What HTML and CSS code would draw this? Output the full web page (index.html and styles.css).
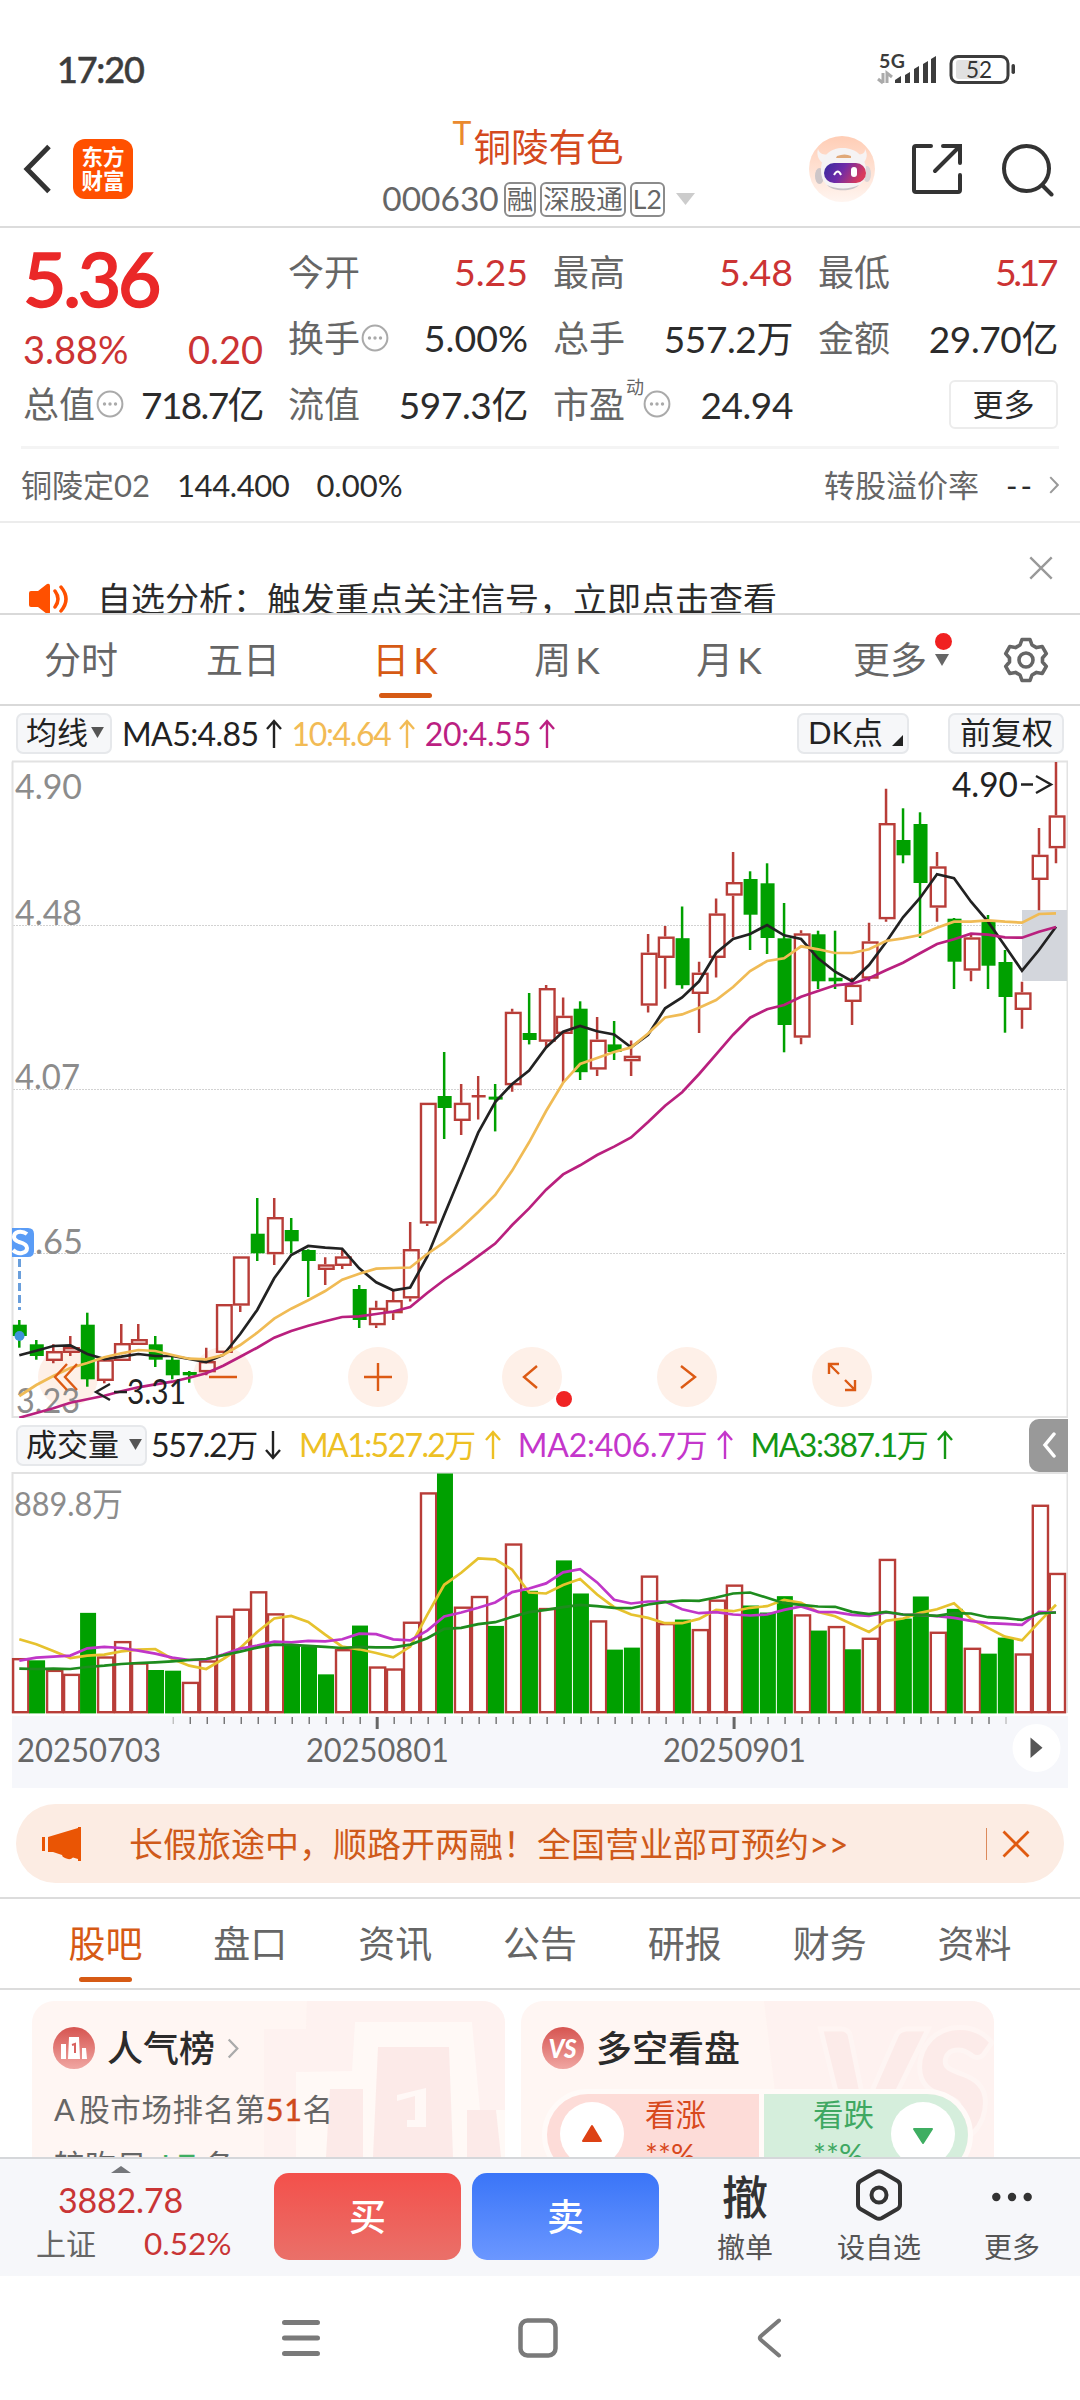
FILE: index.html
```html
<!DOCTYPE html>
<html lang="zh-CN">
<head>
<meta charset="utf-8">
<title>铜陵有色 000630</title>
<link rel="stylesheet" href="styles.css">
</head>
<body>
<svg class="defs" aria-hidden="true">
  <symbol id="up" viewBox="0 0 16 30"><path d="M8 29V2M1 10L8 2l7 8" fill="none" stroke="currentColor" stroke-width="2.4"/></symbol>
  <symbol id="down" viewBox="0 0 16 30"><path d="M8 1v27M1 20l7 8 7-8" fill="none" stroke="currentColor" stroke-width="2.4"/></symbol>
  <symbol id="info" viewBox="0 0 28 28"><circle cx="14" cy="14" r="12.4" fill="none" stroke="#aaa" stroke-width="2"/><circle cx="8.5" cy="14" r="1.7" fill="#aaa"/><circle cx="14" cy="14" r="1.7" fill="#aaa"/><circle cx="19.500" cy="14" r="1.7" fill="#aaa"/></symbol>
  <symbol id="cross" viewBox="0 0 28 28"><path d="M1.500 1.500l25 25M26.500 1.500l-25 25" fill="none" stroke="currentColor" stroke-width="2.800"/></symbol>
  <symbol id="next" viewBox="0 0 12 22"><path d="M1.500 1.500L10.500 11l-9 9.500" fill="none" stroke="currentColor" stroke-width="2.400"/></symbol>
</svg>

<div class="statusbar">
  <span class="clock">17:20</span>
  <svg class="signal" width="140" height="36" viewBox="876 50 140 36">
    <text x="879" y="68" font-size="19.500" font-weight="700" fill="#3c3c3c" textLength="26">5G</text>
    <path d="M883 73v10M878 79l5 4M887 83V73l5 4" fill="none" stroke="#aaa" stroke-width="3"/>
    <path d="M895 83v-3l6-4v7zM905 83v-8l5-3v11zM914 83V69l5-3v17zM923 83V64l5-3v22zM931 83V59l5-3v27z" fill="#3c3c3c"/>
    <rect x="956" y="60" width="24" height="19" rx="3" fill="#e1e1e1"/>
    <rect x="951" y="56.500" width="57" height="26" rx="7" fill="none" stroke="#3c3c3c" stroke-width="3"/>
    <rect x="1011.500" y="64" width="3.500" height="10" rx="1.700" fill="#3c3c3c"/>
    <text x="966" y="78" font-size="22.500" fill="#333" textLength="26">52</text>
  </svg>
</div>

<header class="header">
  <div class="left">
    <svg width="30" height="50" viewBox="0 0 30 50"><path d="M27 2.500L5 25l22 22.500" fill="none" stroke="#333" stroke-width="5"/></svg>
    <div class="logo"><span>东方</span><span>财富</span></div>
  </div>
  <div class="title">
    <div class="name"><sup>T</sup>铜陵有色</div>
    <div class="code"><span class="num">000630</span><i>融</i><i>深股通</i><i>L2</i><svg width="19" height="12" viewBox="0 0 19 12"><path d="M0 0h19L9.500 12z" fill="#ccc"/></svg></div>
  </div>
  <div class="tools">
    <svg width="66" height="66" viewBox="0 0 66 66">
      <defs>
        <linearGradient id="peach" x1="0" y1="0" x2="0" y2="1"><stop offset="0" stop-color="#ffcdb5"/><stop offset="1" stop-color="#fff5f0"/></linearGradient>
        <linearGradient id="visor" x1="0" y1="0" x2="1" y2=".3"><stop offset="0" stop-color="#352a9e"/><stop offset=".5" stop-color="#6f2ba8"/><stop offset="1" stop-color="#d83a5c"/></linearGradient>
      </defs>
      <circle cx="33" cy="33" r="33" fill="url(#peach)"/>
      <ellipse cx="10.500" cy="40" rx="4.500" ry="8" fill="#cdc6c8"/><ellipse cx="58" cy="38" rx="4" ry="8" fill="#dcd5d6"/>
      <path d="M9 13c2 6 6 5 10 6l-4 9c-5-3-8-9-6-15zM56 13c0 5-3 5-7 6l5 8c4-3 5-9 2-14z" fill="#f7f3f3"/>
      <path d="M12 34c0-14 9-22 22-22s23 9 23 23c0 12-8 18-23 18s-22-6-22-19z" fill="#f5f3f4"/>
      <path d="M18 49c8 4 22 5 32 0-6 7-26 7-32 0z" fill="#c9c4c8"/>
      <rect x="15" y="27" width="42" height="20" rx="10" fill="url(#visor)"/>
      <path d="M25 39q4-7 7 0" fill="none" stroke="#fff" stroke-width="2"/><rect x="42" y="31" width="6" height="10" rx="3" fill="#fff"/>
      <path d="M28 20q8-3 14 0v2H27z" fill="#e0a878"/>
    </svg>
    <svg class="share" width="52" height="52" viewBox="0 0 52 52"><path d="M20 3H5q-2 0-2 2v42q0 2 2 2h42q2 0 2-2V32M32 3h17v17M49 3L24 28" fill="none" stroke="#333" stroke-width="4" stroke-linecap="round"/></svg>
    <svg width="54" height="54" viewBox="0 0 54 54"><circle cx="25.500" cy="25.500" r="22.500" fill="none" stroke="#333" stroke-width="4"/><path d="M42 43l8.500 8.500" stroke="#333" stroke-width="4" stroke-linecap="round"/></svg>
  </div>
</header>

<section class="quote">
  <div class="main">
    <div class="price">5.36</div>
    <div class="pair red change"><span>3.88%</span><span>0.20</span></div>
    <div class="pair"><label>总值<svg><use href="#info"/></svg></label><b class="tight">718.7亿</b></div>
  </div>
  <div class="col">
    <div class="pair red"><label>今开</label><b>5.25</b></div>
    <div class="pair"><label>换手<svg><use href="#info"/></svg></label><b>5.00%</b></div>
    <div class="pair"><label>流值</label><b class="snug">597.3亿</b></div>
  </div>
  <div class="col">
    <div class="pair red"><label>最高</label><b>5.48</b></div>
    <div class="pair"><label>总手</label><b class="snug">557.2万</b></div>
    <div class="pair"><label>市盈<sup>动</sup><svg><use href="#info"/></svg></label><b class="snug">24.94</b></div>
  </div>
  <div class="col">
    <div class="pair red"><label>最低</label><b class="tighter">5.17</b></div>
    <div class="pair"><label>金额</label><b class="snug">29.70亿</b></div>
    <div class="pair end"><span class="more">更多</span></div>
  </div>
</section>

<section class="bond">
  <label>铜陵定02</label><span class="val">144.400</span><span>0.00%</span>
  <label class="push">转股溢价率</label><span class="dash">--</span><svg width="10" height="20"><use href="#next"/></svg>
</section>

<section class="notice">
  <svg class="horn" width="40" height="32" viewBox="0 0 40 32"><path d="M0 10q0-2 2-2h7l9-7q3-1 3 2v26q0 3-3 2l-9-7H2q-2 0-2-2z" fill="#ff5000"/><path d="M26 8q6 8 0 16M32 4q10 12 0 24" fill="none" stroke="#ff5000" stroke-width="3.500" stroke-linecap="round"/></svg>
  <span>自选分析：触发重点关注信号，立即点击查看</span>
  <svg class="close" width="24" height="24"><use href="#cross"/></svg>
</section>

<nav class="periods">
  <span>分时</span><span>五日</span><span class="on">日<u>K</u></span><span>周<u>K</u></span><span>月<u>K</u></span>
  <span class="drop">更多<svg width="14" height="12" viewBox="0 0 14 12"><path d="M0 0h14L7 12z" fill="#666"/></svg><em></em></span>
  <svg class="gear" width="46" height="46" viewBox="0 0 46 46"><path d="M19 2.500h8l2 5.500 4.500 2.600 5.800-1 4 7-3.800 4.400v4l3.800 4.400-4 7-5.800-1L29 38l-2 5.500h-8L17 38l-4.500-2.600-5.800 1-4-7L6.500 25v-4l-3.800-4.400 4-7 5.800 1L17 8z" fill="none" stroke="#666" stroke-width="3.600" stroke-linejoin="round"/><circle cx="23" cy="23" r="7" fill="none" stroke="#666" stroke-width="3.600"/></svg>
</nav>

<section class="ma">
  <span class="chip">均线<svg width="13" height="11" viewBox="0 0 14 12"><path d="M0 0h14L7 12z" fill="#555"/></svg></span>
  <span class="ma5">MA5:4.85<svg><use href="#up"/></svg></span>
  <span class="ma10">10:4.64<svg><use href="#up"/></svg></span>
  <span class="ma20">20:4.55<svg><use href="#up"/></svg></span>
  <span class="chip dk">DK点<svg width="11" height="11" viewBox="0 0 11 11"><path d="M11 0v11H0z" fill="#222"/></svg></span>
  <span class="chip adj">前复权</span>
</section>

<svg id="kline" class="chart" width="1068" height="658" viewBox="0 760 1068 658"></svg>

<section class="ma vol">
  <span class="chip">成交量<svg width="13" height="11" viewBox="0 0 14 12"><path d="M0 0h14L7 12z" fill="#555"/></svg></span>
  <span class="ma5">557.2万<svg><use href="#down"/></svg></span>
  <span class="v1">MA1:527.2万<svg><use href="#up"/></svg></span>
  <span class="v2">MA2:406.7万<svg><use href="#up"/></svg></span>
  <span class="v3">MA3:387.1万<svg><use href="#up"/></svg></span>
  <span class="expand"><svg width="14" height="26" viewBox="0 0 14 26"><path d="M12 2L3 13l9 11" fill="none" stroke="#fff" stroke-width="3.500" stroke-linecap="round"/></svg></span>
</section>

<svg id="volume" class="chart" width="1068" height="316" viewBox="0 1472 1068 316"></svg>

<section class="promo">
  <svg width="40" height="34" viewBox="0 0 40 34"><path d="M0 10h3v14H0zM6 10L36 1V0h3v34h-3v-2l-5-1.500q-3 3-8 .5-3-1-3-3L11 25H6z" fill="#ea5504"/></svg>
  <span class="text">长假旅途中，顺路开两融！全国营业部可预约&gt;&gt;</span>
  <i></i>
  <svg class="x" width="28" height="28"><use href="#cross"/></svg>
</section>

<nav class="tabs">
  <span class="on">股吧</span><span>盘口</span><span>资讯</span><span>公告</span><span>研报</span><span>财务</span><span>资料</span>
</nav>

<section class="cards">
  <article class="card">
    <svg class="bg" width="473" height="156" viewBox="0 0 473 156"><path d="M275 0H473V156H232V28h42z" fill="#fdeeec" opacity=".55"/><path d="M323 21H440L448 109l25 0V156H264V71l56-1z" fill="#fffaf8" opacity=".8"/><path d="M346 46h71l4 110h-80zM298 88h33v68h-37zM435 109h29l5 47h-34z" fill="#fbe6e5" opacity=".8"/><path d="M365 94l29-7v31h0v8h-19v-7h8v-24l-18 5z" fill="#fff8f6"/></svg>
    <h3><svg width="42" height="42" viewBox="0 0 42 42"><defs><linearGradient id="badge" x1="0" y1="0" x2="0" y2="1"><stop offset="0" stop-color="#d65450"/><stop offset="1" stop-color="#f0a6a2"/></linearGradient></defs><circle cx="21" cy="21" r="21" fill="url(#badge)"/><path d="M8 17h5v15H8zM16 10h10l1 22H15zM29 21h4l1 11h-5z" fill="#fff"/><path d="M19 18l3-1v9" stroke="#d9625f" stroke-width="2" fill="none"/></svg>人气榜<svg class="go" width="12" height="21"><use href="#next"/></svg></h3>
    <p><u>A</u>股市场排名第<b>51</b>名</p>
    <p class="second">较昨日<b class="green">↓7</b>名</p>
  </article>
  <article class="card">
    <svg class="bg" width="473" height="156" viewBox="0 0 473 156"><path d="M243 0H473V156H262z" fill="#fdeeec" opacity=".55"/><text x="296" y="140" font-size="150" font-weight="900" font-style="italic" fill="#fce9e7" stroke="#fff6f4" stroke-width="10" paint-order="stroke" opacity=".75" textLength="172">VS</text></svg>
    <h3><svg width="42" height="42" viewBox="0 0 42 42"><circle cx="21" cy="21" r="21" fill="url(#badge)"/><text x="20.500" y="31" text-anchor="middle" font-size="26" font-weight="900" font-style="italic" fill="#fff" textLength="28" lengthAdjust="spacingAndGlyphs">VS</text></svg>多空看盘</h3>
    <div class="vote">
      <div class="bull"><svg width="64" height="64" viewBox="0 0 64 64"><circle cx="32" cy="32" r="32" fill="#fff"/><path d="M32 24l9 15H23z" fill="#dd4114" stroke="#dd4114" stroke-width="2" stroke-linejoin="round"/></svg><span>看涨<br>**%</span></div>
      <div class="bear"><span>看跌<br>**%</span><svg width="64" height="64" viewBox="0 0 64 64"><circle cx="32" cy="32" r="32" fill="#fff"/><path d="M32 41l-9-14h18z" fill="#3fae62" stroke="#3fae62" stroke-width="2" stroke-linejoin="round"/></svg></div>
    </div>
  </article>
</section>

<footer class="actions">
  <div class="index">
    <svg width="20" height="7" viewBox="0 0 20 7"><path d="M0 7h20L10 0z" fill="#75777b"/></svg>
    <b>3882.78</b>
    <div><span>上证</span><em>0.52%</em></div>
  </div>
  <button class="buy">买</button>
  <button class="sell">卖</button>
  <div class="act"><strong>撤</strong><span>撤单</span></div>
  <div class="act mid"><svg width="48" height="52" viewBox="0 0 48 52"><path d="M21 3q3-1.500 6 0l15.500 9q2.500 1.500 2.500 4.500v19q0 3-2.500 4.500L27 49q-3 1.500-6 0L5.500 40Q3 38.500 3 35.500v-19Q3 13.500 5.500 12z" fill="none" stroke="#333" stroke-width="4"/><circle cx="24" cy="26" r="7.500" fill="none" stroke="#333" stroke-width="4"/></svg><span>设自选</span></div>
  <div class="act last"><svg width="40" height="52" viewBox="0 0 40 52"><circle cx="4.300" cy="28" r="4.200" fill="#333"/><circle cx="20" cy="28" r="4.200" fill="#333"/><circle cx="35.700" cy="28" r="4.200" fill="#333"/></svg><span>更多</span></div>
</footer>

<nav class="system">
  <svg width="38" height="38" viewBox="0 0 38 38"><path d="M2.500 3.500h33M2.500 19h33M2.500 34.500h33" stroke="#7a7a7a" stroke-width="5" stroke-linecap="round"/></svg>
  <svg width="40" height="40" viewBox="0 0 40 40"><rect x="2.500" y="2.500" width="35" height="35" rx="7" fill="none" stroke="#7a7a7a" stroke-width="4.500"/></svg>
  <svg width="26" height="40" viewBox="0 0 26 40"><path d="M23 2.500L4.500 18.500q-1.500 1.500 0 3L23 37.500" fill="none" stroke="#7a7a7a" stroke-width="4" stroke-linecap="round"/></svg>
</nav>
<script src="chart.js"></script>
</body>
</html>
```
FILE: styles.css
```css
* { box-sizing: border-box; }
body {
  margin: 0; width: 1080px; height: 2400px; overflow: hidden; background: #fff; color: #2b2b2b;
  font-family: Lato, "Noto Sans CJK SC", sans-serif; font-size: 36px; line-height: 1;
}
svg { display: block; flex: none; }
svg text { font-family: Lato, "Noto Sans CJK SC", sans-serif; }
i, em { font-style: normal; }
u { text-decoration: none; }
b { font-weight: 400; }
.defs { position: absolute; width: 0; height: 0; }

.statusbar { height: 120px; padding: 50px 64px 0 57px; display: flex; justify-content: space-between; color: #3c3c3c; }
.clock { font-size: 36px; line-height: 38px; font-weight: 500; -webkit-text-stroke: .5px #3c3c3c; letter-spacing: -1.200px; }

.header { height: 108px; border-bottom: 2px solid #dcdcdc; display: grid; grid-template-columns: 370px 1fr 370px; }
.header .left { display: flex; gap: 21px; padding: 19px 0 0 22px; }
.header .left svg { margin-top: 5px; }
.logo { width: 60px; height: 60px; border-radius: 12px; background: #ff5000; color: #fff; font-size: 21.500px; font-weight: 700; line-height: 24px; display: flex; flex-direction: column; align-items: center; justify-content: center; }
.title { display: flex; flex-direction: column; align-items: center; }
.name { color: #d4491e; font-size: 37.500px; line-height: 50px; padding-top: 2px; display: flex; margin-left: -4px; }
.name sup { color: #ea8a2e; font-size: 32px; line-height: 22px; margin-right: 2px; }
.code { display: flex; align-items: center; height: 40px; margin-top: 7px; margin-left: -3px; color: #666; }
.code .num { font-size: 33.500px; margin-right: 5px; }
.code i { border: 2px solid #8b8b8b; border-radius: 6px; height: 35px; line-height: 30px; font-size: 26.500px; padding: 0 1px; margin-right: 4px; }
.code i:nth-of-type(3) { padding: 0 1px; }
.code svg { margin-left: 7px; }
.tools { display: flex; padding: 16px 0 0 99px; }
.tools .share { margin: 7px 38px 0 36px; }
.tools svg:last-child { margin-top: 7px; }

.quote { height: 221px; margin: 0 21px; padding: 0 1px 0 2px; border-bottom: 3px solid #f4f4f4; display: grid; grid-template-columns: repeat(4, 1fr); column-gap: 25px; }
.pair { height: 66px; display: flex; align-items: center; justify-content: space-between; }
.pair label { color: #666; display: flex; align-items: center; }
.pair label svg { width: 28px; height: 28px; margin-left: 1px; }
.pair b { font-size: 37.500px; }
.pair .snug { font-size: 37px; letter-spacing: -.4px; }
.pair .tight { font-size: 37px; letter-spacing: -1.600px; }
.pair .tighter { letter-spacing: -3.500px; margin-right: 3px; }
.pair sup { font-size: 18px; align-self: flex-start; margin: -8px 0 0 1px; line-height: 18px; width: 16px; }
.pair.red, .red b { color: #cc3333; }
.col { padding-top: 11px; }
.price { color: #ea2828; font-size: 75px; font-weight: 500; -webkit-text-stroke: 1.500px #ea2828; line-height: 83px; height: 92px; padding-top: 9px; letter-spacing: -3.200px; }
.main .change { height: 58px; font-size: 38px; }
.main .pair:last-child { height: 52px; }
.more { width: 109px; height: 49px; border: 2px solid #ececec; border-radius: 6px; font-size: 31px; line-height: 44px; text-align: center; }
.pair.end { justify-content: flex-end; }

.bond { height: 74px; padding: 0 21px; border-bottom: 2px solid #ececec; display: flex; align-items: center; font-size: 31px; }
.bond label { color: #666; }
.bond span { margin-left: 27px; }
.bond .val { letter-spacing: -.4px; }
.bond .push { margin-left: auto; }
.bond .dash { margin-right: 14px; letter-spacing: 3px; }
.bond svg { color: #999; }

.notice { height: 92px; border-bottom: 2px solid #d9d9d9; padding: 0 27px 0 29px; display: flex; font-size: 34px; line-height: 48px; overflow: hidden; }
.notice .horn { margin: 60px 28px 0 0; }
.notice span { padding-top: 52px; white-space: nowrap; }
.notice .close { color: #999; margin: 33px 0 0 auto; }

.periods { height: 91px; border-bottom: 2px solid #d9d9d9; padding-right: 31px; display: flex; align-items: center; color: #666; font-size: 37px; }
.periods span { width: 162px; height: 89px; line-height: 89px; text-align: center; }
.periods u { margin-left: 4px; }
.periods .drop { width: 184px; display: flex; align-items: center; padding-left: 43px; position: relative; }
.drop svg { margin-left: 8px; }
.drop em { position: absolute; left: 125px; top: 18px; width: 17px; height: 17px; border-radius: 50%; background: #f02020; }
.gear { margin-left: auto; }
.on { color: #d65a14; position: relative; }
.on::after { content: ""; position: absolute; left: 50%; margin-left: -26.500px; bottom: 6px; width: 53px; height: 5px; border-radius: 3px; background: #d65a14; }

.ma { height: 54px; padding: 1px 16px 0; display: flex; align-items: center; font-size: 32px; color: #222; }
.ma span { display: flex; align-items: center; white-space: nowrap; }
.ma span svg { width: 16px; height: 30px; }
.ma .chip { height: 41px; padding: 0 6px 2px 8px; border: 2px solid #e6e8eb; border-radius: 7px; background: #f6f7f9; font-size: 31px; }
.ma .chip svg { width: 13px; height: 11px; margin-left: 3px; }
.ma5 { margin-left: 10px; letter-spacing: -.6px; }
.ma5 svg, .ma10 svg, .ma20 svg { margin-left: 8px; }
.ma10 { color: #f2bb55; margin-left: 9px; letter-spacing: -1.300px; }
.ma20 { color: #bb1f82; margin-left: 10px; letter-spacing: -.3px; }
.ma .dk { margin-left: auto; margin-right: 39px; width: 112px; padding-left: 9px; }
.ma .adj { width: 116px; padding: 0 0 2px 10px; }
.ma .dk svg { align-self: flex-end; margin: 0 -3px 4px auto; }
.ma.vol { padding: 0 12px 0 16px; }
.vol .chip { padding-right: 5px; width: 131px; }
.vol .chip svg { margin-left: 10px; }
.vol .ma5 { margin-left: 4px; letter-spacing: -1.300px; }
.v1 { color: #edc024; margin-left: 18px; letter-spacing: -1.600px; }
.v2 { color: #c436cb; margin-left: 17px; letter-spacing: -.2px; }
.v3 { color: #149614; margin-left: 17px; letter-spacing: -1.500px; }
.v1 svg, .v2 svg, .v3 svg { margin-left: 10px; }
.vol .expand { margin-left: auto; width: 39px; height: 53px; background: #999; border-radius: 10px 0 0 10px; justify-content: center; }
.vol .expand svg { width: 14px; height: 26px; }

.promo { margin: 16px 16px 0; height: 79px; border-radius: 40px; background: #fcece3; display: flex; align-items: center; padding: 0 34px 0 26px; color: #cf5a1a; font-size: 34px; }
.promo .text { margin-left: 47px; }
.promo i { width: 1.500px; height: 32px; margin-left: auto; background: #dc8a5c; }
.promo .x { margin-left: 15px; color: #e05a10; }

.tabs { height: 93px; margin-top: 14px; border-top: 2px solid #dcdcdc; border-bottom: 2px solid #dcdcdc; display: flex; padding: 0 33px; color: #666; font-size: 37px; }
.tabs span { flex: 1; text-align: center; line-height: 89px; }
.tabs .on { color: #d65a14; }

.cards { height: 167px; padding: 11px 32px 0; display: flex; gap: 16px; overflow: hidden; }
.card { width: 473px; height: 260px; padding: 26px 22px; border-radius: 22px; background: #fff6f3; position: relative; flex: none; overflow: hidden; }
.card .bg { position: absolute; left: 0; top: 0; }
.card h3 { margin: 0 0 0 -1px; height: 42px; display: flex; align-items: center; gap: 12px; font-size: 36px; font-weight: 500; position: relative; }
.card .go { color: #aaa; }
.card p { margin: 0; padding-top: 19px; height: 61px; line-height: 42px; font-size: 30.500px; color: #666; position: relative; letter-spacing: .6px; }
.card p u { margin-right: 4px; }
.card p b { color: #cf4a1c; font-weight: 500; -webkit-text-stroke: .3px; }
.card p.second { padding-top: 14px; }
.card p .green { color: #3fae62; margin: 0 7px; }
.vote { position: relative; height: 92px; margin: 20px -1px 0 -1px; border: 5px solid #fffaf8; border-radius: 46px; display: flex; overflow: hidden; font-size: 30.500px; line-height: 40px; }
.vote > div { display: flex; }
.vote svg { margin-top: 8px; }
.bull { width: 212px; background: #fddcd8; color: #d8491d; padding-left: 13px; gap: 21px; }
.bear { flex: 1; background: #d5eedc; color: #3fa862; justify-content: flex-end; gap: 17px; padding-right: 13px; border-left: 5px solid #fffaf8; }

.actions { height: 119px; background: #f6f7fa; border-top: 2px solid #d5d7da; display: flex; }
.index { width: 274px; display: flex; flex-direction: column; color: #c93535; padding-top: 7px; }
.index svg { margin-left: 111px; }
.index b { font-size: 34px; line-height: 53px; padding-left: 58px; letter-spacing: -.2px; }
.index div { display: flex; font-size: 31.500px; line-height: 34px; padding-left: 36px; }
.index span { color: #666; width: 108px; font-size: 30px; }
.actions button { width: 187px; height: 87px; margin: 14px 11px 0 0; padding: 0 0 4px; border: 0; border-radius: 15px; color: #fff; font: 500 37px "Noto Sans CJK SC", sans-serif; }
.buy { background: linear-gradient(#f3504b, #ea7069); }
.sell { background: linear-gradient(#3a75f8, #6b97ff); }
.act { display: flex; flex-direction: column; align-items: center; width: 112px; margin-left: 19px; padding-top: 10px; font-size: 28px; color: #555; }
.act strong { font-size: 46px; line-height: 56px; height: 52px; font-weight: 500; color: #333; }
.act span { line-height: 34px; margin-top: 9px; }
.act.mid { margin-left: 22px; }
.act.last { width: 80px; margin-left: 37px; }

.system { height: 124px; display: flex; align-items: center; justify-content: space-between; padding: 0 298px 0 282px; }
```
FILE: chart.js
```js
const STEP = 17, X0 = 19.3;
const cx = i => X0 + i * STEP * 0.9997;

// each row: rising flag, high, body top, body bottom, low
const candles = [
[0,1320,1324.7,1336,1347.7],[0,1340,1344.3,1356,1359.7],[1,1344.3,1351,1361,1363.3],[1,1336,1347,1353,1356],
[0,1312.7,1324.7,1379.3,1386.7],[1,1359.3,1359.3,1381,1383.3],[1,1324,1343,1361,1361],[1,1324,1339,1345,1345],
[0,1336,1344.3,1359.7,1367],[0,1356,1359.7,1375.3,1379.3],[0,1371,1372,1375.3,1382.7],[1,1347.7,1361,1372.3,1375.3],
[1,1304,1304,1353,1353],[1,1256.3,1256.3,1305.7,1312],[0,1198,1233.7,1253.3,1261],[1,1198,1217,1254.3,1265],
[0,1218,1230,1241.3,1253.3],[0,1249.3,1250,1261,1297],[1,1257.3,1264.3,1270,1285],[1,1249,1256.3,1266,1269],
[0,1285,1289,1320,1328],[1,1300.7,1307.7,1325.3,1328],[1,1290.7,1300,1313.3,1320],[1,1222,1249,1298.5,1301.5],
[1,1102.7,1102.7,1223.6,1226],[0,1052,1096,1108,1139],[1,1084,1102.7,1121,1135],[1,1076,1095.2,1096.8,1119.6],
[0,1084,1096.6,1099.6,1131.4],[1,1008.7,1011.7,1085.3,1091.8],[0,993,1033,1040,1044.4],[1,985,988,1041.8,1047.8],
[1,997.4,1015.7,1034,1082.7],[0,1001.3,1008.7,1072.2,1080],[1,1017,1039.6,1069.6,1076],[0,1021,1044.4,1052,1060],
[1,1040.5,1055.7,1061.3,1076],[1,933.9,952.6,1005.7,1012.6],[1,926,936.5,958,988.7],[0,906.5,938.2,985.2,988.7],
[1,961.7,972.6,994,1033],[1,898.6,913.4,958,977.4],[1,852,882,895.7,937.3],[0,871.3,879,914.7,950],
[0,863.3,883.3,938,954],[0,903,938.3,1025,1052.3],[1,930.3,933.3,1037.7,1044.3],[0,930.7,934.3,981.3,989],
[0,930.7,977.7,981.3,989],[1,977.7,984.7,1002,1025],[1,922.7,941.3,978.7,981.3],[1,788.7,823,919.3,921.7],
[0,808.3,840,855.3,863.3],[0,812.3,824,883,938],[1,852,866.3,907.7,921.7],[0,918,918.7,961.7,989],
[1,934.7,937.3,970.7,981.3],[0,915,922,965.7,989],[0,950,962,997,1032.7],[1,981.7,992.3,1010,1028.7],
[1,828,854.7,880,910.3],[1,762,815.3,848.3,863.3]];

const ma5 = [1355.3,1350.7,1346,1345.3,1354,1359,1356.7,1354,1356,1356,1359,1362,1355,1334,1310,1278.3,1255,1246,1247.7,1248.7,1268.3,1282.3,1290.3,1287.5,1256.7,1215,1174,1132.7,1102,1084,1070.5,1047.4,1031.8,1026,1031.3,1034.4,1047.4,1034.8,1008.3,997.4,981.3,953,939,934,925,935.3,939,958.3,971.7,981.3,965,942.3,917.3,898,874.3,878.3,901.7,921.7,946,970.7,950,926.7];
const ma10 = [1396,1385,1376,1368,1363,1357.3,1353.3,1350,1351,1355,1358.7,1359.3,1355,1345,1332.7,1318.7,1308.7,1300.3,1291,1279.7,1273.7,1268.7,1268,1267.5,1254,1242.3,1228,1212,1195,1170.6,1142.3,1111,1082.7,1064,1058,1052,1047.4,1033.5,1017.4,1014.4,1007.8,1000,987,971,961,958.3,946.3,949.3,953,953,949.3,941,938.3,935,927.7,921.7,921.7,920.3,921.7,922.7,914,913.3];
const ma20 = [1417.7,1413,1408.3,1402.7,1399.3,1395.7,1391.3,1387.3,1384.3,1381.7,1377.7,1373.3,1365.7,1356.7,1347.7,1337.7,1331,1325.7,1321.3,1317,1316.3,1314,1311.5,1307,1293,1280,1268.4,1256.2,1243.6,1225,1208.4,1189.7,1174.4,1165.3,1155,1146.6,1137.5,1122,1105.7,1092.2,1074,1054.4,1034.7,1017.7,1009.3,1005,996.7,991,985.3,983.7,978.3,970.3,962.7,953.3,944,939.3,933.7,934.7,937.3,937.7,931.7,927];

// bar tops and averages, in thirds of a pixel below the volume header
const bars = [742,749,777,789,607,737,691,755,778,780,813,749,615,594,542,608,705,708,791,715,645,767,773,633,246,190,588,556,646,399,541,592,450,549,629,717,711,495,637,627,655,567,522,585,606,557,611,660,646,716,681,445,624,558,663,595,711,729,681,728,283,487];
const rising = new Set([0,2,3,5,6,7,10,11,12,13,14,15,19,21,22,23,24,26,27,29,31,34,37,38,40,41,42,46,48,50,51,54,56,59,60,61]);
const v1 = [686,701,721,742,735,732,722,717,715,745,765,775,745,712,664,624,616,634,672,708,716,727,740,708,613,523,487,444,447,478,546,549,524,506,552,590,612,622,638,638,625,598,602,592,587,568,577,604,617,641,664,631,624,607,596,578,625,652,678,689,635,583];
const v2 = [750,741,738,735,713,709,712,720,729,741,748,747,732,714,705,693,695,691,692,686,669,671,686,689,660,618,606,592,576,545,534,519,486,476,516,568,579,573,573,596,608,605,612,615,612,598,588,604,605,613,616,606,612,613,617,622,631,638,640,643,604,606];
const v3 = [774,775,774,775,769,765,760,757,755,752,748,745,734,723,711,702,703,706,709,712,709,710,710,702,683,655,652,641,635,619,605,598,590,583,587,592,593,582,575,570,571,561,549,546,562,578,583,588,589,604,611,604,612,613,616,608,609,620,623,628,609,606];
const vy = v => 1410 + v * 0.3342;

const RED = "#b83d38", GREEN = "#00a000";
const line = (ys, color, w = 2.7) =>
  `<polyline points="${ys.map((y, i) => cx(i).toFixed(1) + "," + y.toFixed(1)).join(" ")}" fill="none" stroke="${color}" stroke-width="${w}"/>`;
const text = (x, y, s, w, size, color) =>
  `<text x="${x}" y="${y}" font-size="${size}" fill="${color}" textLength="${w}" lengthAdjust="spacingAndGlyphs">${s}</text>`;

let k = "";
for (const y of [925.5, 1089.5, 1253.5])
  k += `<path d="M13 ${y}H1066" stroke="#d2d2d2" stroke-width="1" stroke-dasharray="2 1"/>`;
k += `<path d="M12 761.500H1067.500V1417H12.500V761.500" fill="none" stroke="#e2e2e2" stroke-width="2"/>`;
for (const x of [68, 223, 378, 532, 687, 842]) k += `<circle cx="${x}" cy="1377" r="30" fill="#fef0e8"/>`;
k += `<rect x="1022" y="910" width="45" height="71" fill="#d3d6dc"/>`;
candles.forEach(([up, h, t, b, l], i) => {
  const x = cx(i);
  if (!up) k += `<path d="M${x} ${h}V${l}" stroke="${GREEN}" stroke-width="2.500"/><rect x="${x - 6.5}" y="${t}" width="14" height="${b - t}" fill="${GREEN}"/>`;
  else if (b - t < 3) k += `<path d="M${x} ${h}V${l}M${x - 6.5} ${t + 1}h14" stroke="${RED}" stroke-width="2.400"/>`;
  else k += `<path d="M${x} ${h}V${t}M${x} ${b}V${l}" stroke="${RED}" stroke-width="2.500"/><rect x="${x - 6.2}" y="${t + 1.2}" width="14.600" height="${b - t - 2.4}" fill="#fff" fill-opacity=".6" stroke="${RED}" stroke-width="2.400"/>`;
});
k += text(15, 799, "4.90", 67, 34, "#8c8c8c") + text(15, 925, "4.48", 67, 34, "#8c8c8c") + text(15, 1089, "4.07", 65, 34, "#8c8c8c")
  + text(15, 1254, "3.65", 68, 34, "#8c8c8c") + text(16, 1413, "3.23", 64, 34, "#8c8c8c");
k += `<path d="M12 1228h16q6 0 6 6v17q0 6-6 6H12z" fill="#5a9cf6"/><path d="M27 1234q-4-3-9-2-4 1-4 5 0 3 5 5 8 2 8 6 0 4-5 5-5 1-9-3" fill="none" stroke="#fff" stroke-width="4"/>`
  + `<path d="M19.500 1259V1310" stroke="#6a9fdc" stroke-width="3" stroke-dasharray="8 4"/><circle cx="19.500" cy="1336" r="5" fill="#3f92dc"/>`;
k += line(ma5, "#222") + line(ma10, "#f0bb55") + line(ma20, "#b9207e");
k += `<path d="M110 1384l-14 8 14 8M114 1392h13" fill="none" stroke="#222" stroke-width="2.400"/>` + text(127, 1404, "3.31", 59, 34, "#222");
k += text(952, 797, "4.90", 66, 35, "#222") + `<path d="M1021 784.500h12M1036 776l15 8.500-15 8.500" fill="none" stroke="#222" stroke-width="2.400"/>`;
k += `<path d="M67 1364l-12 13 12 13M77 1364l-12 13 12 13M209 1377h28M364 1377h28M378 1363v28M537 1366l-13 11 13 11M681 1366l14 11-14 11M829 1374v-10h10M829 1364l10 10M855 1380v10h-10M855 1390l-10-10" fill="none" stroke="#dc5a14" stroke-width="2.400"/><circle cx="564" cy="1399" r="8" fill="#f02424"/>`;
document.getElementById("kline").innerHTML = k;

let v = `<rect x="12" y="1716" width="1056" height="72" fill="#f6f7fb"/><path d="M12.500 1713V1473H1067.500V1713" fill="none" stroke="#e2e2e2" stroke-width="2"/>`;
bars.forEach((b, i) => {
  const x = cx(i), y = vy(b);
  v += rising.has(i)
    ? `<rect x="${x - 6.2}" y="${y + 1.2}" width="15.200" height="${1711 - y}" fill="#fff" stroke="${RED}" stroke-width="2.400"/>`
    : `<rect x="${x - 7.2}" y="${y}" width="16" height="${1713.4 - y}" fill="${GREEN}"/>`;
});
v += line(v1.map(vy), "#e6c22e") + line(v2.map(vy), "#c036c8") + line(v3.map(vy), "#1e8c1e");
v += text(14, 1516, "889.8万", 109, 33, "#8c8c8c");
for (let i = 9; i < 59; i++) {
  const major = i === 21 || i === 42;
  v += `<path d="M${cx(i) + 1} 1717v${major ? 12 : 7}" stroke="${i === 9 || i === 58 ? "#bbb" : "#666"}" stroke-width="${major ? 3 : 1.300}"/>`;
}
v += text(17, 1762, "20250703", 144, 33, "#666") + text(306, 1762, "20250801", 143, 33, "#666") + text(663, 1762, "20250901", 143, 33, "#666");
v += `<circle cx="1036.500" cy="1748" r="24" fill="#fff"/><path d="M1030.500 1737.500v20.500l12-10.200z" fill="#555"/>`;
document.getElementById("volume").innerHTML = v;
```
